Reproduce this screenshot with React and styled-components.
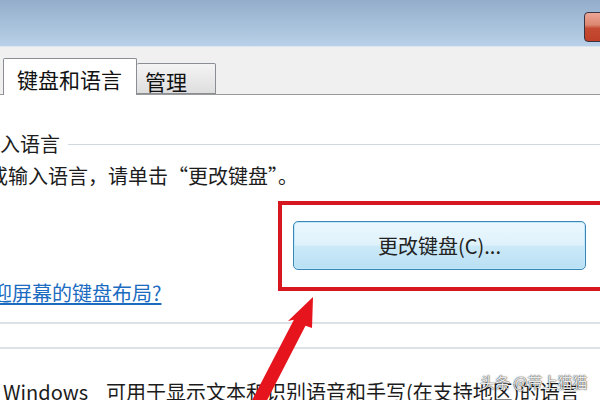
import styled, { createGlobalStyle } from 'styled-components';

const GlobalStyle = createGlobalStyle`
  html, body {
    margin: 0;
    padding: 0;
  }
  body {
    width: 600px;
    height: 400px;
    overflow: hidden;
    background: #fff;
    font-family: "Noto Sans CJK SC", "Liberation Sans", sans-serif;
    color: #1c1c1c;
  }
`;

const Window = styled.div`
  position: relative;
  width: 600px;
  height: 400px;
  display: flex;
  flex-direction: column;
  overflow: hidden;
`;

const TitleBar = styled.div`
  flex: none;
  height: 47px;
  box-sizing: border-box;
  padding-top: 12px;
  display: flex;
  justify-content: flex-end;
  align-items: flex-start;
  background: linear-gradient(#93adcb, #b9d1e8);
  border-bottom: 1px solid #dce6f0;
`;

const CloseButton = styled.div`
  width: 30px;
  height: 30px;
  margin-right: -14px;
  box-sizing: border-box;
  border: 1.5px solid #3a3545;
  border-radius: 4px;
  background: linear-gradient(#eda596 0%, #dc8872 42%, #c64b33 55%, #bf3f29 100%);
`;

const TabStrip = styled.div`
  flex: none;
  height: 48px;
  box-sizing: border-box;
  padding-left: 3px;
  display: flex;
  align-items: flex-end;
  background: #f0f0f0;
  border-bottom: 1px solid #9a9a9a;
`;

const Tab = styled.div`
  box-sizing: border-box;
  width: ${(p) => p.$width}px;
  height: ${(p) => (p.$active ? 37 : 31)}px;
  margin-bottom: ${(p) => (p.$active ? -1 : 0)}px;
  padding: ${(p) => (p.$active ? '8px 0 0 13px' : '5px 0 0 8px')};
  border: 1px solid #8a8d94;
  border-bottom: ${(p) => (p.$active ? 'none' : '1px solid #8a8d94')};
  border-left: ${(p) => (p.$active ? '1px solid #8a8d94' : 'none')};
  border-radius: 2px 2px 0 0;
  background: ${(p) => (p.$active ? '#fff' : 'linear-gradient(#f4f4f4, #dedede)')};
  font-size: 21px;
  line-height: 24px;
  color: #111;
  white-space: nowrap;
`;

const Panel = styled.div`
  flex: 1;
  display: flex;
  flex-direction: column;
  background: #fff;
  overflow: hidden;

  & > * {
    flex: none;
  }
`;

const GroupHeader = styled.div`
  display: flex;
  align-items: center;
  gap: 8px;
  margin-top: 37px;
  margin-left: -120px;
  font-size: 20px;
  line-height: 24px;
  white-space: nowrap;
`;

const HeaderLine = styled.div`
  flex: 1;
  height: 1px;
  background: #d0d8df;
`;

const Line = styled.div`
  margin-top: ${(p) => p.$top}px;
  margin-left: ${(p) => p.$shift}px;
  font-size: 20px;
  line-height: 24px;
  white-space: nowrap;
`;

const Link = styled(Line)`
  color: #1b6cc1;
  text-decoration: underline;
  text-underline-offset: 2px;
`;

const ButtonRow = styled.div`
  display: flex;
  margin-top: 33px;
  padding-left: 293px;
`;

const Button = styled.div`
  width: 293px;
  height: 49px;
  box-sizing: border-box;
  display: flex;
  align-items: center;
  justify-content: center;
  border: 1px solid #3c86b6;
  border-radius: 5px;
  box-shadow: inset 0 0 0 1px #bfe8fb;
  background: linear-gradient(#ecf7fd 0%, #dff2fc 48%, #cbe9f8 52%, #b9e0f4 100%);
  font-size: 20px;
  color: #222;
`;

const Rule = styled.div`
  height: 2px;
  margin-top: ${(p) => p.$top}px;
  background: #dbe1e5;
`;

const Word = styled.span`
  margin-right: 18px;
`;

const Highlight = styled.div`
  position: absolute;
  left: 278px;
  top: 201px;
  width: 340px;
  height: 90px;
  box-sizing: border-box;
  border: 4px solid #d6171f;
  pointer-events: none;
`;

const Overlay = styled.svg`
  position: absolute;
  left: 0;
  top: 0;
  pointer-events: none;
`;

const Watermark = styled.div`
  position: absolute;
  left: 480px;
  top: 372px;
  font-size: 15px;
  line-height: 20px;
  color: rgba(255, 255, 255, 0.92);
  text-shadow: 0 0 1px rgba(0, 0, 0, 0.9), 0 0 2px rgba(0, 0, 0, 0.5);
  white-space: nowrap;
`;

export default function App() {
  return (
    <>
      <GlobalStyle />
      <Window>
        <TitleBar>
          <CloseButton />
        </TitleBar>
        <TabStrip>
          <Tab $active $width={134}>键盘和语言</Tab>
          <Tab $width={79}>管理</Tab>
        </TabStrip>
        <Panel>
          <GroupHeader>
            <span>键盘和其他输入语言</span>
            <HeaderLine />
          </GroupHeader>
          <Line $top={8} $shift={-112}>
            要更改键盘或输入语言，请单击“更改键盘”。
          </Line>
          <ButtonRow>
            <Button>更改键盘(C)...</Button>
          </ButtonRow>
          <Link $top={11} $shift={-108}>
            如何更改欢迎屏幕的键盘布局?
          </Link>
          <Rule $top={17} />
          <Rule $top={23} />
          <Line $top={31} $shift={3}>
            <Word>Windows</Word>可用于显示文本和识别语音和手写(在支持地区)的语言
          </Line>
        </Panel>
        <Highlight />
        <Overlay width="600" height="400" viewBox="0 0 600 400">
          <polygon
            points="313,297 312,328 305.5,325.8 260.5,413 248.5,407 293.9,319.8 288,321"
            fill="#e6141c"
          />
        </Overlay>
        <Watermark>头条 @带上猫猫</Watermark>
      </Window>
    </>
  );
}
